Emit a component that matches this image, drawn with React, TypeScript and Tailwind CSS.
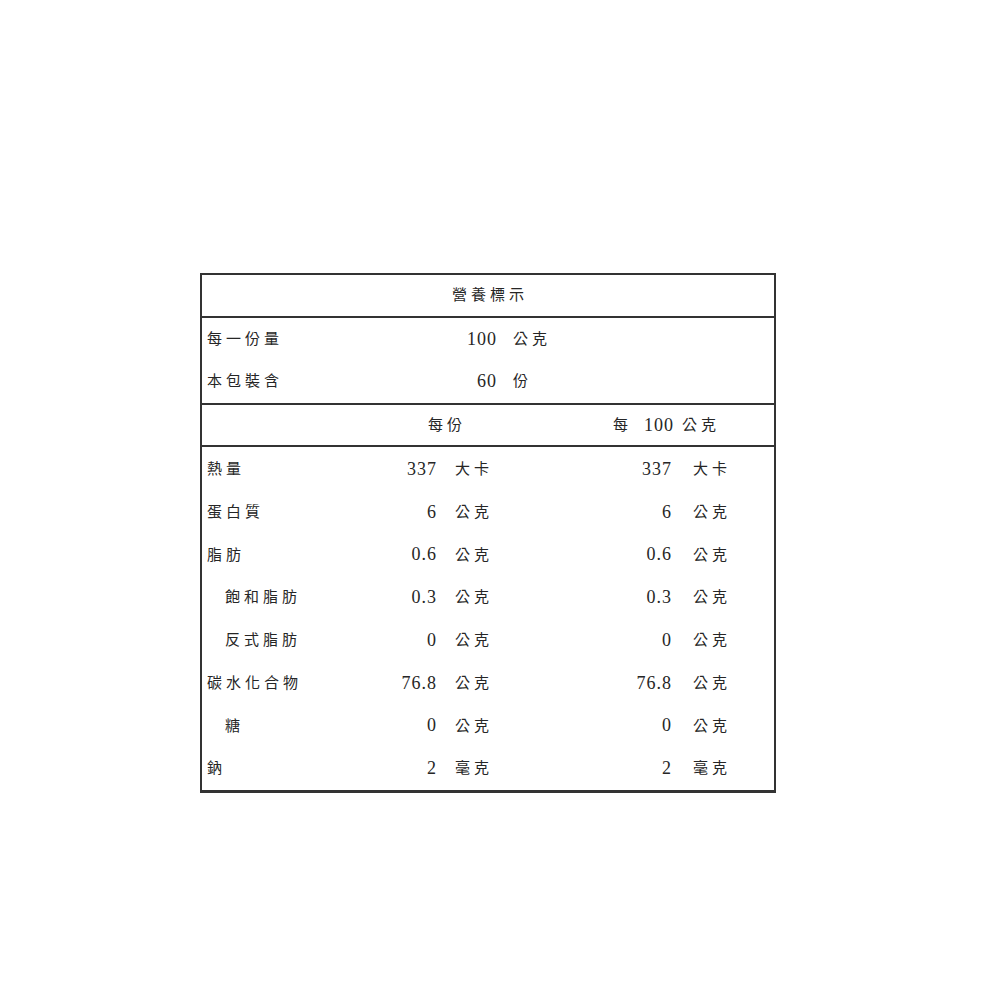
import React from "react";

const font = { fontFamily: '"Liberation Serif", "Noto Sans CJK TC", serif' };

function C({ children, className = "" }: { children: React.ReactNode; className?: string }) {
  return <span className={`text-[15px] tracking-[4px] ${className}`}>{children}</span>;
}
function N({ children }: { children: React.ReactNode }) {
  return <span className="text-[18px] tracking-[1px]">{children}</span>;
}

const rows: { label: string; indent?: boolean; v: string; u: string }[] = [
  { label: "熱量", v: "337", u: "大卡" },
  { label: "蛋白質", v: "6", u: "公克" },
  { label: "脂肪", v: "0.6", u: "公克" },
  { label: "飽和脂肪", indent: true, v: "0.3", u: "公克" },
  { label: "反式脂肪", indent: true, v: "0", u: "公克" },
  { label: "碳水化合物", v: "76.8", u: "公克" },
  { label: "糖", indent: true, v: "0", u: "公克" },
  { label: "鈉", v: "2", u: "毫克" },
];

export default function App() {
  return (
    <div className="w-[1000px] h-[1000px] bg-white pt-[273px] pl-[200px] text-[#262626]" style={font}>
      <div className="w-[576px] border-t-2 border-l-2 border-r-2 border-b-[3px] border-[#333]">
        <div className="h-[41px] flex items-center justify-center pl-[4px]">
          <C>營養標示</C>
        </div>
        <div className="border-t-2 border-[#333]">
          <div className="h-[42px] grid grid-cols-[248px_47px_1fr] items-center">
            <C className="pl-[5px]">每一份量</C>
            <span className="text-right"><N>100</N></span>
            <C className="pl-[16px]">公克</C>
          </div>
          <div className="h-[43px] grid grid-cols-[248px_47px_1fr] items-center">
            <C className="pl-[5px]">本包裝含</C>
            <span className="text-right"><N>60</N></span>
            <C className="pl-[16px]">份</C>
          </div>
        </div>
        <div className="border-t-2 border-[#333] h-[42px] grid grid-cols-[226px_185px_1fr] items-center">
          <span />
          <C>每份</C>
          <span className="flex items-center">
            <C className="tracking-[0px]">每</C>
            <span className="ml-[12px]"><N>100</N></span>
            <C className="ml-[8px]">公克</C>
          </span>
        </div>
        <div className="border-t-2 border-[#333] pt-[1px]">
          {rows.map((r) => (
            <div key={r.label} className="h-[42.75px] grid grid-cols-[188px_47px_188px_47px_1fr] items-center">
              <C className={r.indent ? "pl-[23px]" : "pl-[5px]"}>{r.label}</C>
              <span className="text-right"><N>{r.v}</N></span>
              <C className="pl-[18px]">{r.u}</C>
              <span className="text-right"><N>{r.v}</N></span>
              <C className="pl-[21px]">{r.u}</C>
            </div>
          ))}
        </div>
      </div>
    </div>
  );
}
